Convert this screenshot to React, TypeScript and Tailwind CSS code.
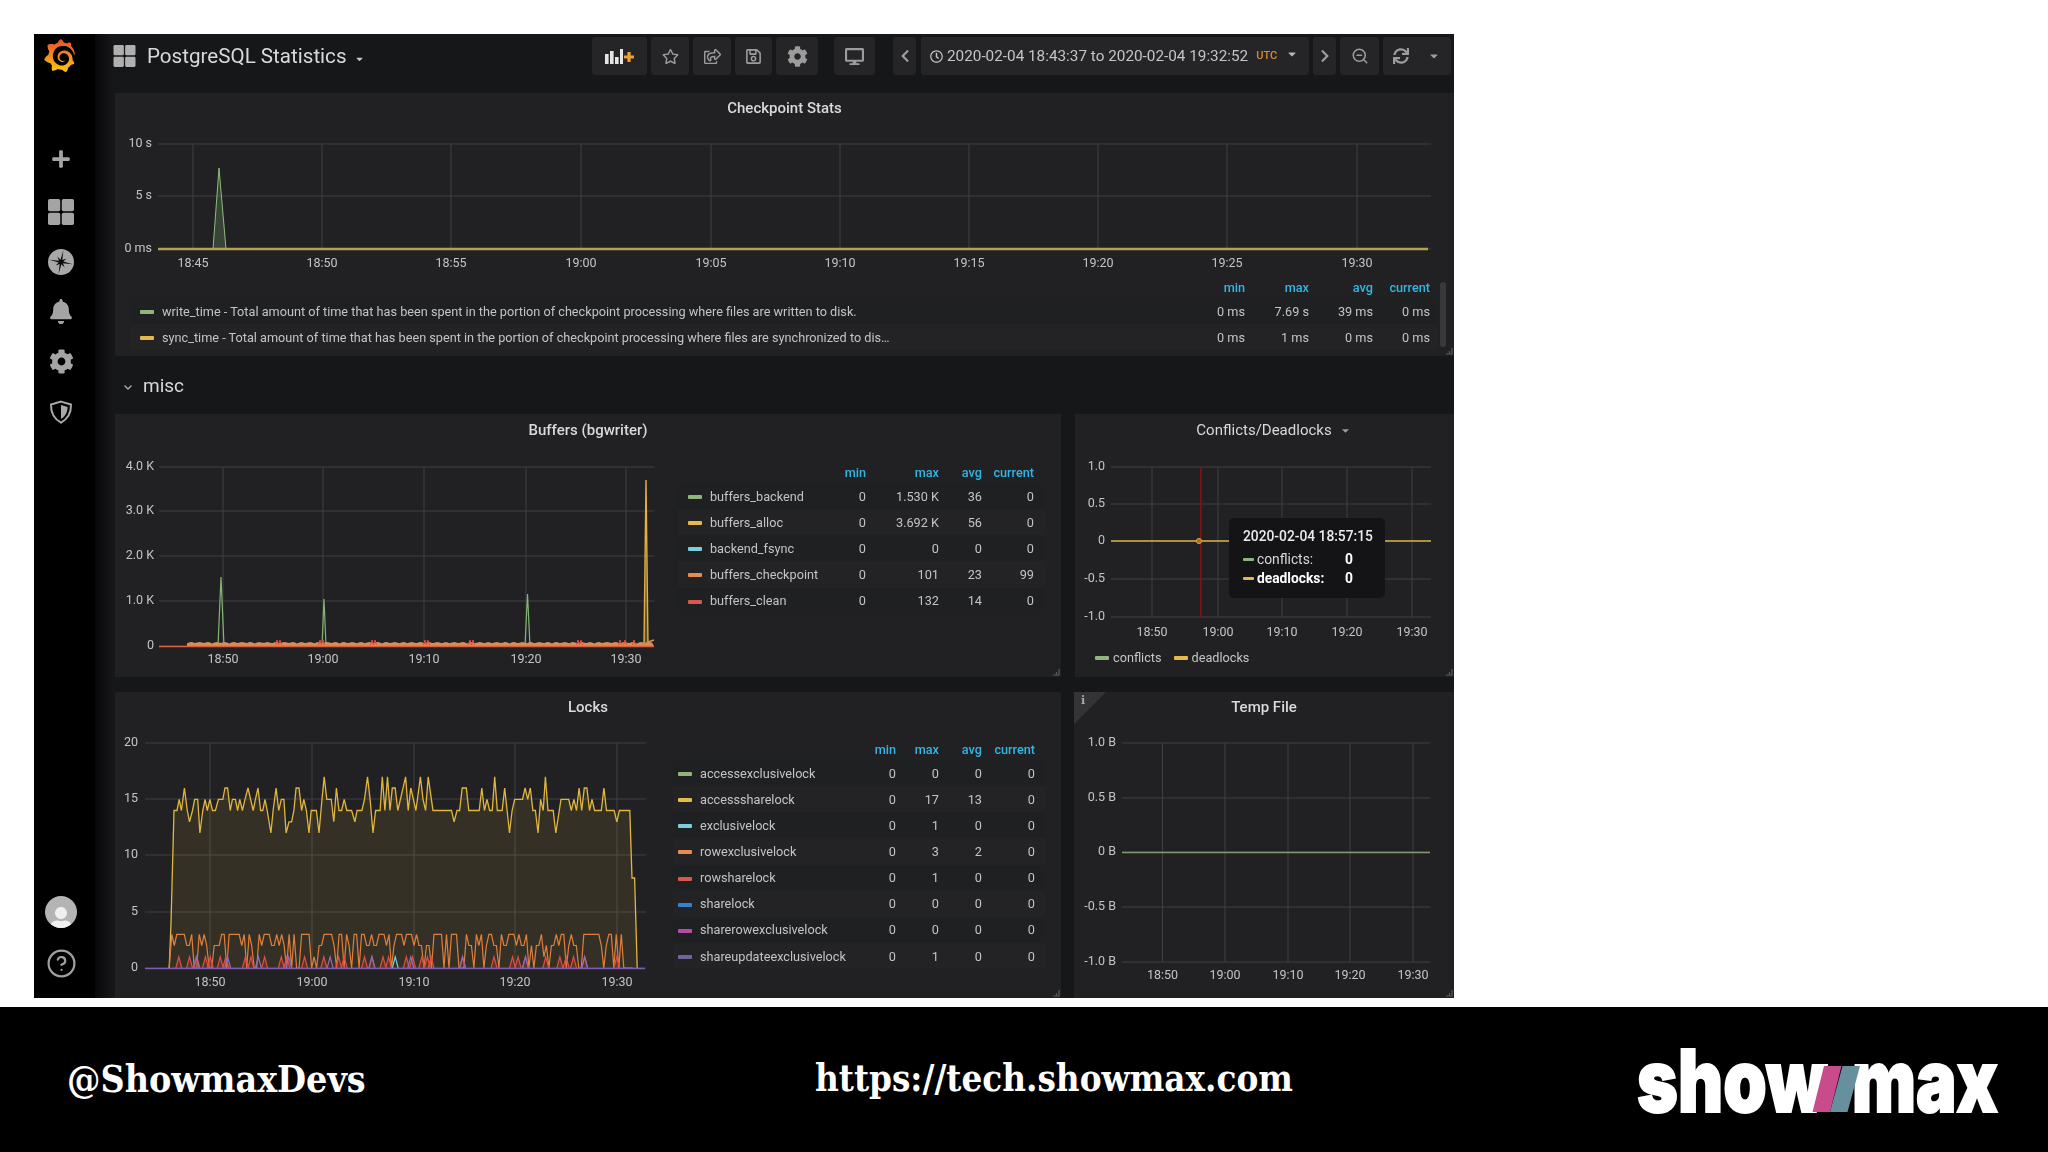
import React from "react";
import { SiGrafana } from "react-icons/si";
import { FaBell, FaCog, FaPlus, FaRegStar, FaRegShareSquare, FaRegSave, FaDesktop, FaChevronLeft, FaChevronRight, FaRegClock, FaSync, FaCaretDown, FaChevronDown, FaUser } from "react-icons/fa";
import { FiHelpCircle, FiZoomOut } from "react-icons/fi";

const GRID = "#404042";
const LABEL = "#c4c4c4";

function Grid4({ className }: { className: string }) {
  return (
    <svg viewBox="0 0 24 24" className={className} fill="currentColor">
      <rect x="0" y="0" width="11.3" height="11.3" rx="1.6" />
      <rect x="12.7" y="0" width="11.3" height="11.3" rx="1.6" />
      <rect x="0" y="12.7" width="11.3" height="11.3" rx="1.6" />
      <rect x="12.7" y="12.7" width="11.3" height="11.3" rx="1.6" />
    </svg>
  );
}

function Compass({ className }: { className: string }) {
  const pts = Array.from({ length: 16 }, (_, i) => {
    const a = (i * Math.PI) / 8 + 0.2;
    const r = i % 4 === 0 ? 11 : i % 2 === 0 ? 6 : 2.2;
    return `${12 + r * Math.sin(a)},${12 - r * Math.cos(a)}`;
  }).join(" ");
  return (
    <svg viewBox="0 0 24 24" className={className}>
      <circle cx="12" cy="12" r="12" fill="#a8a8a8" />
      <polygon points={pts} fill="#0c0c0c" />
    </svg>
  );
}

function Shield({ className }: { className: string }) {
  return (
    <svg viewBox="0 0 24 24" className={className}>
      <path d="M12 1.6 L22 4.6 C22.2 12.6 18.6 19 12 22.6 C5.4 19 1.8 12.6 2 4.6 Z" fill="none" stroke="#a8a8a8" strokeWidth="2" />
      <path d="M12 5 L18.6 7 C18.4 12.6 16 16.6 12 19 Z" fill="#a8a8a8" />
    </svg>
  );
}

function AddPanel() {
  return (
    <svg width="30" height="15" viewBox="0 0 30 15">
      <g fill="#e6e6e6">
        <rect x="0" y="5" width="3.6" height="10" />
        <rect x="5" y="2" width="3.6" height="13" />
        <rect x="10" y="8" width="3.6" height="7" />
        <rect x="15" y="0" width="3" height="15" />
      </g>
      <path d="M24 3 v10 M19 8 h10" stroke="#f0a030" strokeWidth="3.2" />
    </svg>
  );
}

function Handle() {
  return (
    <svg width="8" height="8" viewBox="0 0 8 8" className="absolute right-[1px] bottom-[1px]">
      <path d="M7 1 V7 H1 M4.5 4 V7" stroke="#5a5a5a" strokeWidth="1.2" fill="none" />
    </svg>
  );
}

function Frame({ x0, x1, top, bottom, ys, xs, labelRight, xLabelY }: {
  x0: number; x1: number; top: number; bottom: number;
  ys: [number, string][]; xs: [number, string][]; labelRight: number; xLabelY: number;
}) {
  return (
    <g>
      {ys.map(([y, t]) => (
        <g key={t}>
          <line x1={x0} x2={x1} y1={y} y2={y} stroke={GRID} strokeWidth="1.2" />
          <text x={labelRight} y={y + 3.3} textAnchor="end" fontSize="12.5" fill={LABEL}>{t}</text>
        </g>
      ))}
      {xs.map(([x, t]) => (
        <g key={t}>
          <line x1={x} x2={x} y1={top} y2={bottom} stroke={GRID} strokeWidth="1" />
          <text x={x} y={xLabelY + 4} textAnchor="middle" fontSize="12.5" fill={LABEL}>{t}</text>
        </g>
      ))}
    </g>
  );
}

function Title({ children, className }: { children: React.ReactNode; className: string }) {
  return <div className={`flex items-center justify-center text-[15px] font-medium text-[#d8d9da] ${className}`}>{children}</div>;
}

type Row = { c: string; n: string; v: string[] };

function CheckpointChart() {
  return (
    <svg width="1339" height="152" viewBox="115 125 1339 152" className="block">
      <Frame x0={158} x1={1431} top={144} bottom={249} labelRight={152} xLabelY={263}
        ys={[[144, "10 s"], [196, "5 s"], [249, "0 ms"]]}
        xs={[[193, "18:45"], [322, "18:50"], [451, "18:55"], [581, "19:00"], [711, "19:05"], [840, "19:10"], [969, "19:15"], [1098, "19:20"], [1227, "19:25"], [1357, "19:30"]]} />
      <polygon points="213,249 219,168 226,249" fill="#7eb26d" fillOpacity="0.25" />
      <polyline points="213,249 219,168 226,249" fill="none" stroke="#8cbd7a" strokeWidth="1" />
      <line x1="158" x2="1428" y1="249" y2="249" stroke="#b4a250" strokeWidth="2.4" />
    </svg>
  );
}

function BuffersChart() {
  const band: string[] = [];
  for (let x = 187; x <= 654; x += 2.5) {
    const y = 645 - 1.5 - 1.5 * Math.abs(Math.sin(x * 0.37));
    band.push(`${x},${y.toFixed(1)}`);
  }
  const reds = [277, 280, 320, 323, 372, 375, 425, 428, 470, 473, 578, 581, 620, 625, 634];
  return (
    <svg width="555" height="230" viewBox="115 447 555 230" className="block">
      <Frame x0={159} x1={654} top={467} bottom={646} labelRight={154} xLabelY={659}
        ys={[[467, "4.0 K"], [511, "3.0 K"], [556, "2.0 K"], [601, "1.0 K"], [646, "0"]]}
        xs={[[223, "18:50"], [323, "19:00"], [424, "19:10"], [526, "19:20"], [626, "19:30"]]} />
      <polyline points="218,646 221,577 224,646" fill="none" stroke="#84b573" strokeWidth="1.2" />
      <polyline points="322,646 324,599 326,646" fill="none" stroke="#84b573" strokeWidth="1.2" />
      <polyline points="525,646 527.5,594 530,646" fill="none" stroke="#84b573" strokeWidth="1.2" />
      <polyline points="644,646 646,480 648,646" fill="#eab839" fillOpacity="0.3" stroke="#e0b040" strokeWidth="1.4" />
      <polygon points={`187,646 ${band.join(" ")} 654,646`} fill="#d68f58" />
      <line x1="159" x2="654" y1="646.5" y2="646.5" stroke="#d9603f" strokeWidth="1.6" />
      {reds.map((x) => (
        <polyline key={x} points={`${x - 1.5},645 ${x},640 ${x + 1.5},645`} fill="none" stroke="#e24d42" strokeWidth="1" />
      ))}
      <polyline points="644,645 648,642 654,640" fill="none" stroke="#d68f58" strokeWidth="1.5" />
    </svg>
  );
}

const lx = (z: number) => 100 + z / 2.703;
const ly = (v: number) => 968 - v * 11.25;
const YELLOW: [number, number][] = [[187,0],[192,4],[200,14],[208,14],[214,15],[220,14],[228,16],[236,14],[242,13],[250,14],[256,15],[264,15],[270,12],[278,14],[284,15],[290,14],[297,15],[304,14],[312,14],[320,15],[332,15],[338,16],[345,16],[352,14],[358,15],[366,15],[372,14],[378,15],[385,14],[392,15],[400,16],[407,15],[414,14],[420,15],[427,16],[434,14],[440,14],[446,15],[452,14],[462,12],[468,14],[476,16],[483,14],[490,15],[497,15],[503,12],[511,13],[518,13],[524,14],[530,16],[538,16],[545,14],[551,15],[558,14],[565,12],[571,14],[585,14],[592,12],[600,15],[606,17],[613,15],[625,15],[632,13],[639,16],[646,14],[653,14],[660,15],[667,14],[680,14],[689,13],[695,14],[708,14],[715,15],[723,17],[730,15],[738,12],[745,14],[757,14],[763,17],[770,14],[777,17],[784,14],[790,16],[798,16],[805,14],[812,15],[826,17],[833,14],[840,16],[847,15],[854,14],[866,17],[873,15],[880,14],[887,17],[900,14],[950,14],[957,13],[965,14],[972,14],[979,16],[990,16],[997,14],[1025,14],[1032,16],[1039,14],[1046,15],[1053,14],[1060,14],[1067,17],[1074,14],[1087,14],[1094,16],[1107,12],[1114,14],[1121,15],[1128,15],[1142,15],[1149,16],[1156,15],[1163,16],[1170,14],[1177,14],[1184,12],[1191,15],[1198,14],[1204,17],[1211,14],[1225,14],[1232,12],[1246,15],[1267,15],[1274,14],[1281,15],[1288,14],[1295,16],[1302,14],[1309,16],[1316,16],[1323,14],[1330,15],[1337,14],[1355,14],[1362,16],[1369,14],[1390,14],[1397,13],[1404,14],[1432,14],[1438,8],[1445,8],[1452,0]];
const ORANGE = "3233332230032320022233033333230320032333223232030300333301022333320330320330332232233323023332333232202203333030333000322032302332203223332322302022312022323302322003333333202330303000";
const REDS = [213, 242, 262, 285, 298, 325, 340, 393, 408, 445, 490, 505, 553, 605, 645, 660, 715, 735, 765, 780, 828, 845, 870, 885, 895, 980, 1065, 1115, 1130, 1150, 1205, 1243, 1260, 1280, 1310, 1397];
const PURPLES = [260, 345, 428, 510, 622, 735, 840, 980, 1150, 1310];

function LocksChart() {
  const yl = YELLOW.map(([z, v]) => `${lx(z).toFixed(1)},${ly(v).toFixed(1)}`).join(" ");
  const orange = ORANGE.split("").map((d, i) => `${lx(194 + i * 6.75).toFixed(1)},${ly(Number(d)).toFixed(1)}`).join(" ");
  const pulse = (z: number, h: number) => `${lx(z - 8)},968 ${lx(z)},${ly(h)} ${lx(z + 8)},968`;
  return (
    <svg width="555" height="273" viewBox="115 725 555 273" className="block">
      <Frame x0={145} x1={646} top={743} bottom={968} labelRight={138} xLabelY={982}
        ys={[[743, "20"], [799, "15"], [855, "10"], [912, "5"], [968, "0"]]}
        xs={[[210, "18:50"], [312, "19:00"], [414, "19:10"], [515, "19:20"], [617, "19:30"]]} />
      <polygon points={`${lx(187)},968 ${yl}`} fill="#eab839" fillOpacity="0.1" />
      <polyline points={yl} fill="none" stroke="#e0b63f" strokeWidth="1.3" />
      <polyline points={`${lx(187)},968 ${orange} ${lx(1440)},968`} fill="none" stroke="#e07f3c" strokeWidth="1.2" />
      {REDS.map((z) => <polyline key={z} points={pulse(z, 1)} fill="#e24d42" fillOpacity="0.2" stroke="#e24d42" strokeWidth="1.2" />)}
      {PURPLES.map((z) => <polyline key={z} points={pulse(z, 1)} fill="none" stroke="#8a6fc0" strokeWidth="1.2" />)}
      <polyline points={pulse(798, 1)} fill="none" stroke="#6ed0e0" strokeWidth="1.2" />
      <line x1="145" x2="645" y1="968.5" y2="968.5" stroke="#7a5db0" strokeWidth="1.6" />
    </svg>
  );
}

function ConflictsChart() {
  return (
    <svg width="379" height="200" viewBox="1075 447 379 200" className="block">
      <Frame x0={1111} x1={1431} top={467} bottom={617} labelRight={1105} xLabelY={632}
        ys={[[467, "1.0"], [504, "0.5"], [541, "0"], [579, "-0.5"], [617, "-1.0"]]}
        xs={[[1152, "18:50"], [1218, "19:00"], [1282, "19:10"], [1347, "19:20"], [1412, "19:30"]]} />
      <line x1="1200.7" x2="1200.7" y1="467" y2="617" stroke="#7c1616" strokeWidth="1.6" />
      <line x1="1111" x2="1431" y1="541" y2="541" stroke="#d8b044" strokeWidth="1.5" />
      <circle cx="1199" cy="541" r="2.6" fill="#a5702c" stroke="#d89a3c" strokeWidth="1" />
    </svg>
  );
}

function TempChart() {
  return (
    <svg width="380" height="273" viewBox="1074 725 380 273" className="block">
      <Frame x0={1122} x1={1430} top={743} bottom={962} labelRight={1116} xLabelY={975}
        ys={[[743, "1.0 B"], [798, "0.5 B"], [852, "0 B"], [907, "-0.5 B"], [962, "-1.0 B"]]}
        xs={[[1162.5, "18:50"], [1225, "19:00"], [1288, "19:10"], [1350, "19:20"], [1413, "19:30"]]} />
      <line x1="1122" x2="1430" y1="852.5" y2="852.5" stroke="#7f9a72" strokeWidth="1.6" />
    </svg>
  );
}

function LegendRows({ rows, cols, pad }: { rows: Row[]; cols: string; pad: string }) {
  return (
    <div className="text-[12.7px] text-[#c4c4c6]">
      <div className={`grid h-[21px] items-center text-right font-medium text-[#33b5e5] ${cols} ${pad}`}>
        <span />
        <span>min</span>
        <span>max</span>
        <span>avg</span>
        <span>current</span>
      </div>
      {rows.map((r, i) => (
        <div key={r.n} className={`grid h-[26.15px] items-center ${cols} ${pad} ${i % 2 === 0 ? "bg-[#1f2022]" : "bg-[#232326]"}`}>
          <span className="flex items-center gap-[8px] whitespace-nowrap">
            <i className={`h-[4px] w-[14px] shrink-0 translate-y-[1px] rounded-[1px] ${r.c}`} />
            {r.n}
          </span>
          {r.v.map((v, j) => <span key={j} className="text-right">{v}</span>)}
        </div>
      ))}
    </div>
  );
}

const CHECK: Row[] = [
  { c: "bg-[#8fb47c]", n: "write_time - Total amount of time that has been spent in the portion of checkpoint processing where files are written to disk.", v: ["0 ms", "7.69 s", "39 ms", "0 ms"] },
  { c: "bg-[#e5b94a]", n: "sync_time - Total amount of time that has been spent in the portion of checkpoint processing where files are synchronized to dis…", v: ["0 ms", "1 ms", "0 ms", "0 ms"] },
];
const BUF: Row[] = [
  { c: "bg-[#8fb47c]", n: "buffers_backend", v: ["0", "1.530 K", "36", "0"] },
  { c: "bg-[#e5b94a]", n: "buffers_alloc", v: ["0", "3.692 K", "56", "0"] },
  { c: "bg-[#79cfdc]", n: "backend_fsync", v: ["0", "0", "0", "0"] },
  { c: "bg-[#e88b4f]", n: "buffers_checkpoint", v: ["0", "101", "23", "99"] },
  { c: "bg-[#d9584c]", n: "buffers_clean", v: ["0", "132", "14", "0"] },
];
const LOCKS: Row[] = [
  { c: "bg-[#8fb47c]", n: "accessexclusivelock", v: ["0", "0", "0", "0"] },
  { c: "bg-[#e5b94a]", n: "accesssharelock", v: ["0", "17", "13", "0"] },
  { c: "bg-[#79cfdc]", n: "exclusivelock", v: ["0", "1", "0", "0"] },
  { c: "bg-[#e88b4f]", n: "rowexclusivelock", v: ["0", "3", "2", "0"] },
  { c: "bg-[#d9584c]", n: "rowsharelock", v: ["0", "1", "0", "0"] },
  { c: "bg-[#2f86cf]", n: "sharelock", v: ["0", "0", "0", "0"] },
  { c: "bg-[#b84aa8]", n: "sharerowexclusivelock", v: ["0", "0", "0", "0"] },
  { c: "bg-[#74649e]", n: "shareupdateexclusivelock", v: ["0", "1", "0", "0"] },
];

const BTN = "flex h-[38px] items-center justify-center rounded-[3px] bg-[#252527] text-[#9c9c9c]";

function TopBar() {
  return (
    <div className="flex h-[59px] shrink-0 pt-[3px]">
      <div className="flex h-[38px] w-[497px] items-center pl-[18px]">
        <Grid4 className="h-[22px] w-[23px] text-[#b0b0b0]" />
        <span className="ml-[11px] text-[20.6px] text-[#d8d9da]">PostgreSQL Statistics</span>
        <FaCaretDown className="ml-[8px] mt-[6px] h-[10px] w-[9px] text-[#c8c8c8]" />
      </div>
      <div className="flex gap-[4px]">
        <div className={`${BTN} w-[55px]`}><AddPanel /></div>
        <div className={`${BTN} w-[38px]`}><FaRegStar className="h-[17px] w-[17px]" /></div>
        <div className={`${BTN} w-[38px]`}><FaRegShareSquare className="h-[17px] w-[17px]" /></div>
        <div className={`${BTN} w-[37px]`}><FaRegSave className="h-[17px] w-[17px]" /></div>
        <div className={`${BTN} w-[42px] text-[#7c7c7e]`}><FaCog className="h-[21px] w-[21px]" /></div>
      </div>
      <div className={`${BTN} ml-[16px] w-[41px]`}><FaDesktop className="h-[19px] w-[19px]" /></div>
      <div className={`${BTN} ml-[18px] w-[23px]`}><FaChevronLeft className="h-[14px] w-[10px]" /></div>
      <div className={`${BTN} ml-[5px] w-[388px] justify-start pl-[9px] text-[15.3px] text-[#c4c4c6]`}>
        <FaRegClock className="mr-[4px] h-[13px] w-[13px] shrink-0" />
        <span className="whitespace-nowrap">2020-02-04 18:43:37 to 2020-02-04 19:32:52</span>
        <span className="ml-[8px] text-[11px] font-medium text-[#d98a2f]">UTC</span>
        <FaCaretDown className="ml-[10px] mb-[4px] h-[12px] w-[10px] text-[#b8b8b8]" />
      </div>
      <div className={`${BTN} ml-[4px] w-[23px]`}><FaChevronRight className="h-[14px] w-[10px]" /></div>
      <div className={`${BTN} ml-[4px] w-[39px]`}><FiZoomOut className="h-[18px] w-[18px]" /></div>
      <div className={`${BTN} ml-[4px] w-[68px] gap-[20px] pr-[3px]`}>
        <FaSync className="h-[16px] w-[16px]" />
        <FaCaretDown className="h-[12px] w-[10px]" />
      </div>
    </div>
  );
}

function Sidebar() {
  return (
    <div className="flex w-[61px] shrink-0 flex-col items-center bg-black pr-[7px] text-[#a4a4a4]">
      <svg width="0" height="0" className="absolute">
        <defs>
          <linearGradient id="grafanaGrad" x1="0" y1="1" x2="0" y2="0">
            <stop offset="0" stopColor="#fbca0a" />
            <stop offset="0.5" stopColor="#f58a1f" />
            <stop offset="1" stopColor="#ee4e24" />
          </linearGradient>
        </defs>
      </svg>
      <SiGrafana fill="url(#grafanaGrad)" className="ml-[-3px] mt-[4px] h-[35px] w-[33px]" />
      <FaPlus className="mt-[76px] h-[20px] w-[20px]" />
      <Grid4 className="mt-[30px] h-[26px] w-[26px]" />
      <Compass className="mt-[24px] h-[26px] w-[26px]" />
      <FaBell className="mt-[24px] h-[25px] w-[22px]" />
      <FaCog className="mt-[25px] h-[25px] w-[25px]" />
      <Shield className="mt-[26px] h-[24px] w-[24px]" />
      <div className="mt-auto flex h-[32px] w-[32px] items-end justify-center overflow-hidden rounded-full bg-[#b4b4b4]">
        <FaUser className="h-[24px] w-[24px] translate-y-[3px] text-[#f0f0f0]" />
      </div>
      <FiHelpCircle className="mb-[19px] mt-[20px] h-[31px] w-[31px] text-[#a0a0a0]" strokeWidth="1.7" />
    </div>
  );
}

function Logo() {
  return (
    <svg width="372" height="110" viewBox="1632 1025 372 110" className="block">
      <g fill="#fff" fontWeight="900" fontSize="86" fontFamily="Inter, 'Open Sans', sans-serif" stroke="#fff" strokeWidth="2">
        <g transform="translate(1637 1111) scale(0.76 1)">
          <text textLength="250" lengthAdjust="spacingAndGlyphs">show</text>
        </g>
        <g transform="translate(1852 1111) scale(0.76 1)">
          <text textLength="192" lengthAdjust="spacingAndGlyphs">max</text>
        </g>
      </g>
      <polygon points="1812.5,1111 1830,1111 1841.5,1065 1824,1065" fill="#c84b8b" />
      <polygon points="1830,1111 1847.5,1111 1860,1065 1842.5,1065" fill="#67909f" />
    </svg>
  );
}

export default function App() {
  return (
    <div className="flex h-[1152px] w-[2048px] flex-col overflow-hidden bg-white font-['Roboto',sans-serif]">
      <div className="h-[34px] shrink-0" />
      <div className="ml-[34px] flex h-[964px] w-[1420px] shrink-0 overflow-hidden blur-[0.4px]">
        <Sidebar />
        <div className="flex min-w-0 flex-1 flex-col bg-[#161719] bg-[linear-gradient(90deg,#08080a_0px,#161719_18px)]">
          <TopBar />
          <div className="ml-[20px] flex flex-col">
            <section className="relative h-[263px] bg-[#212124]">
              <Title className="h-[32px] pb-[2px]">Checkpoint Stats</Title>
              <CheckpointChart />
              <div className="ml-[15px] w-[1307px]">
                <LegendRows rows={CHECK} cols="grid-cols-[1045px_60px_64px_64px_57px]" pad="pl-[10px] pr-[7px]" />
              </div>
              <div className="absolute bottom-[9px] right-[8px] h-[65px] w-[6px] rounded-[3px] bg-[#38383b]" />
              <Handle />
            </section>
            <div className="flex h-[58px] items-center pl-[8px] pt-[2px]">
              <FaChevronDown className="mt-[3px] h-[9px] w-[10px] text-[#a8a8a8]" />
              <span className="ml-[10px] text-[19px] text-[#d8d9da]">misc</span>
            </div>
            <div className="flex h-[263px] gap-[14px]">
              <section className="relative flex w-[946px] shrink-0 flex-col bg-[#212124]">
                <Title className="h-[33px]">Buffers (bgwriter)</Title>
                <div className="flex">
                  <BuffersChart />
                  <div className="ml-[8px] w-[367px] pt-[15px]">
                    <LegendRows rows={BUF} cols="grid-cols-[148px_30px_73px_43px_52px]" pad="pl-[10px] pr-[11px]" />
                  </div>
                </div>
                <Handle />
              </section>
              <section className="relative min-w-0 flex-1 bg-[#212124]">
                <Title className="h-[33px] gap-[9px] pl-[17px]">
                  <span className="font-normal">Conflicts/Deadlocks</span>
                  <FaCaretDown className="h-[11px] w-[9px] text-[#9a9a9a]" />
                </Title>
                <ConflictsChart />
                <div className="flex h-[22px] items-center pl-[20px] text-[12.7px] text-[#c4c4c6]">
                  <i className="h-[4px] w-[14px] rounded-[1px] bg-[#8fb47c]" />
                  <span className="ml-[4px]">conflicts</span>
                  <i className="ml-[12px] h-[4px] w-[14px] rounded-[1px] bg-[#e5b94a]" />
                  <span className="ml-[4px]">deadlocks</span>
                </div>
                <div className="absolute left-[154px] top-[104px] h-[80px] w-[156px] rounded-[5px] bg-[#141416] pl-[14px] pt-[8px] text-[13.8px] text-[#d8d9da]">
                  <div className="font-medium text-[#ececec]">2020-02-04 18:57:15</div>
                  <div className="mt-[3px] grid grid-cols-[102px_1fr] leading-[19px]">
                    <span className="flex items-center gap-[3px]"><i className="h-[3px] w-[11px] rounded-[1px] bg-[#8fb47c]" />conflicts:</span>
                    <span className="font-bold text-white">0</span>
                    <span className="flex items-center gap-[3px] font-bold text-white"><i className="h-[3px] w-[11px] rounded-[1px] bg-[#e5b94a]" />deadlocks:</span>
                    <span className="font-bold text-white">0</span>
                  </div>
                </div>
                <Handle />
              </section>
            </div>
            <div className="mt-[15px] flex h-[306px] gap-[13px]">
              <section className="relative flex w-[946px] shrink-0 flex-col bg-[#212124]">
                <Title className="h-[33px] pb-[2px]">Locks</Title>
                <div className="flex">
                  <LocksChart />
                  <div className="ml-[3px] w-[372px] pt-[14px]">
                    <LegendRows rows={LOCKS} cols="grid-cols-[188px_30px_43px_43px_53px]" pad="pl-[5px] pr-[10px]" />
                  </div>
                </div>
                <Handle />
              </section>
              <section className="relative min-w-0 flex-1 bg-[#212124]">
                <Title className="h-[33px] pb-[2px]">Temp File</Title>
                <TempChart />
                <div className="absolute left-0 top-0 h-0 w-0 border-r-[32px] border-t-[32px] border-r-transparent border-t-[#343436]" />
                <span className="absolute left-[7px] top-[1px] font-['DejaVu_Serif',serif] text-[11px] font-bold text-[#aaaaaa]">i</span>
                <Handle />
              </section>
            </div>
          </div>
        </div>
      </div>
      <div className="h-[9px] shrink-0" />
      <div className="flex min-h-0 flex-1 items-center bg-black pl-[67px] text-white">
        <span className="w-[748px] shrink-0 font-['DejaVu_Serif_Condensed','DejaVu_Serif',serif] text-[37.2px] font-bold">@ShowmaxDevs</span>
        <span className="font-['DejaVu_Serif_Condensed','DejaVu_Serif',serif] text-[36.4px] font-bold">https://tech.showmax.com</span>
        <div className="ml-auto mr-[44px] translate-y-[1px]"><Logo /></div>
      </div>
    </div>
  );
}
